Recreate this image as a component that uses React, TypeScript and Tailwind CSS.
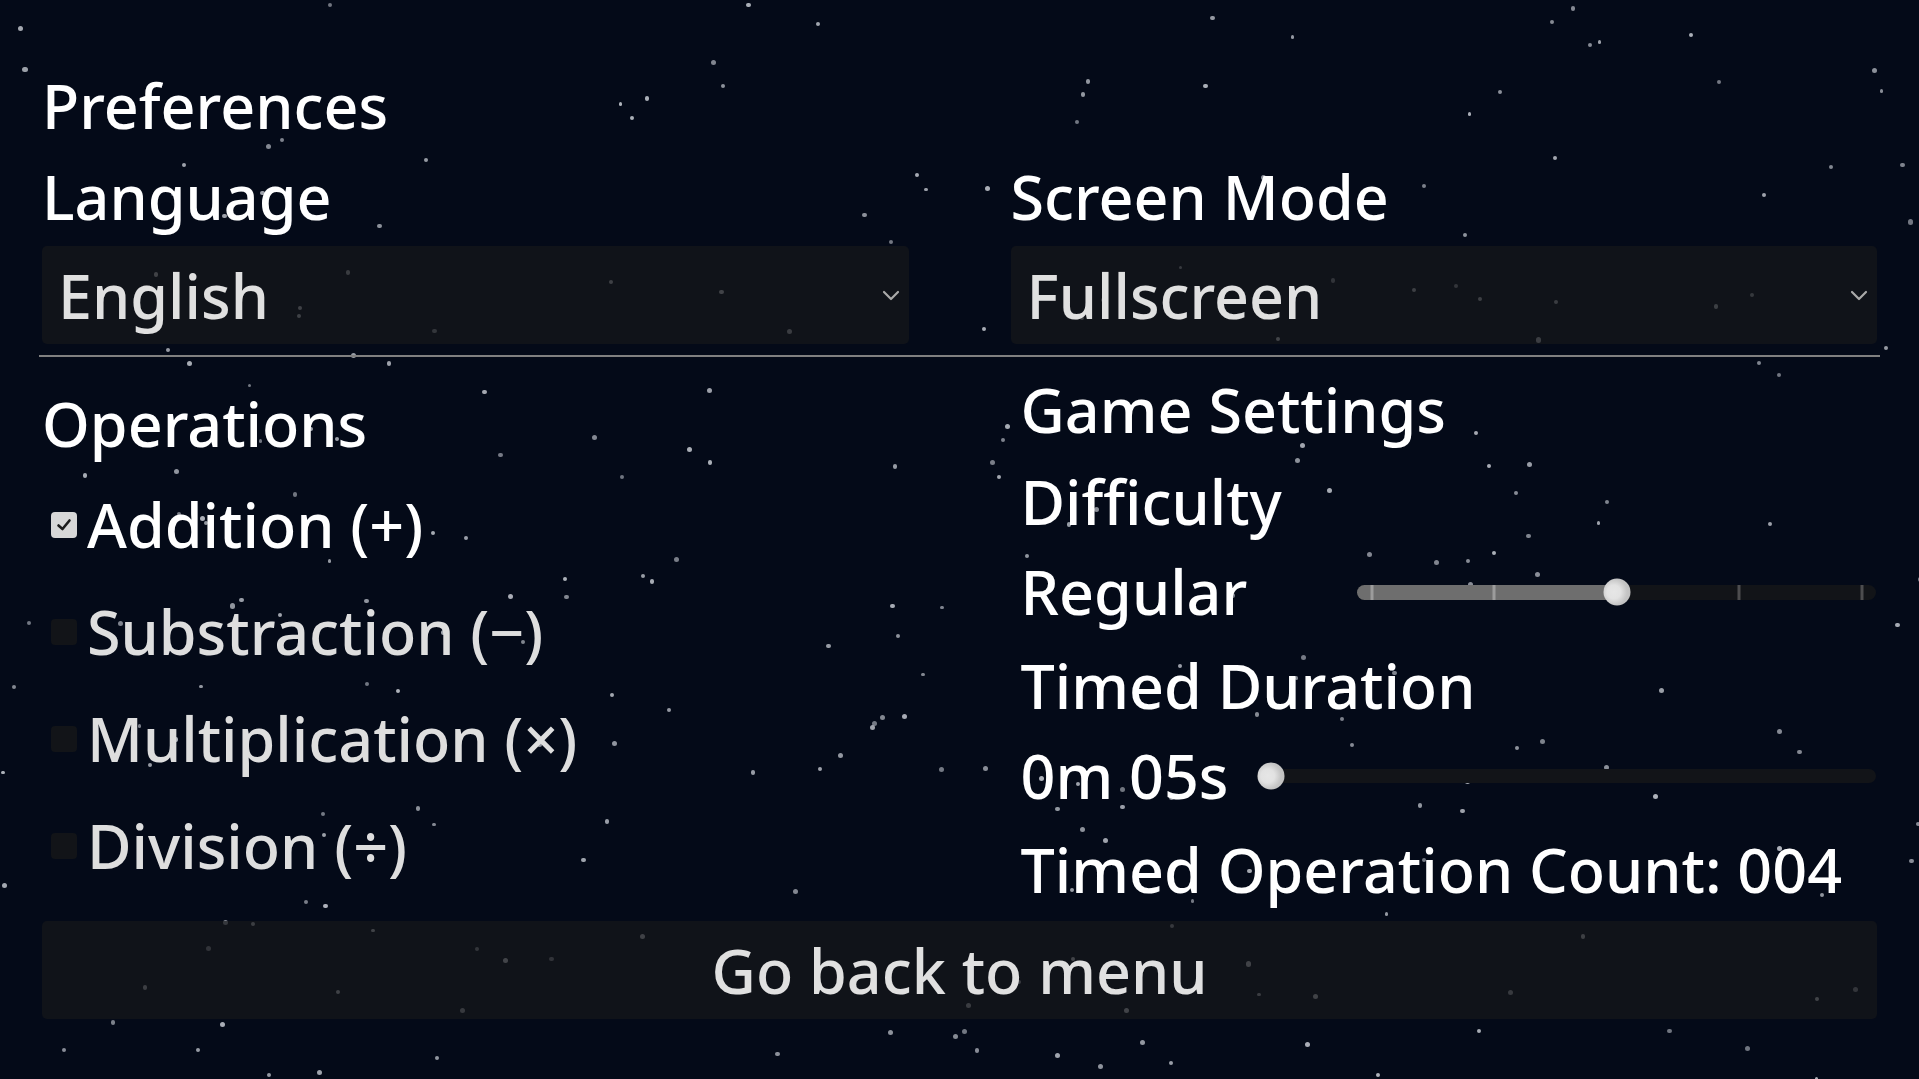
import { useMemo } from 'react';

const OPERATIONS = [
  { label: 'Addition (+)', checked: true },
  { label: 'Substraction (−)', checked: false },
  { label: 'Multiplication (×)', checked: false },
  { label: 'Division (÷)', checked: false },
];

// deterministic star field so every render looks the same
function makeStars(count: number, seed: number) {
  let s = seed;
  const rand = () => {
    s |= 0;
    s = (s + 0x6d2b79f5) | 0;
    let t = Math.imul(s ^ (s >>> 15), 1 | s);
    t = (t + Math.imul(t ^ (t >>> 7), 61 | t)) ^ t;
    return ((t ^ (t >>> 14)) >>> 0) / 4294967296;
  };
  return Array.from({ length: count }, () => ({
    x: rand() * 1919,
    y: rand() * 1079,
    size: 3.6 + rand() * 1.6,
    alpha: 0.6 + rand() * 0.35,
  }));
}

function Stars() {
  const stars = useMemo(() => makeStars(260, 7), []);
  return (
    <div className="pointer-events-none absolute inset-0">
      {stars.map((st, i) => (
        <span
          key={i}
          className="absolute rounded-full bg-[#b8bcc4]"
          style={{ left: st.x, top: st.y, width: st.size, height: st.size, opacity: st.alpha }}
        />
      ))}
    </div>
  );
}

function Chevron() {
  return (
    <svg width="18" height="11" viewBox="0 0 18 11" fill="none">
      <polyline points="2,2 9,9 16,2" stroke="#a9a9a9" strokeWidth="2.2" strokeLinecap="round" strokeLinejoin="round" />
    </svg>
  );
}

function Select({ value }: { value: string }) {
  return (
    <div className="mt-[4px] flex h-[98px] items-center justify-between rounded-[5px] bg-[rgba(22,23,26,0.7)] pl-[16px] pr-[9px] text-[#e0e0e0]">
      <span>{value}</span>
      <Chevron />
    </div>
  );
}

function Checkbox({ checked }: { checked: boolean }) {
  return (
    <span
      className={`flex h-[26px] w-[26px] shrink-0 items-center justify-center rounded-[4px] ${
        checked ? 'bg-[#d7d7d7]' : 'bg-[#121418]'
      }`}
    >
      {checked && (
        <svg width="18" height="18" viewBox="0 0 18 18" fill="none">
          <polyline points="3.5,9.5 7.5,13 14.5,4.5" stroke="#1c1c1c" strokeWidth="2.6" strokeLinecap="round" strokeLinejoin="round" />
        </svg>
      )}
    </span>
  );
}

function Thumb() {
  return (
    <span className="absolute top-1/2 h-[27px] w-[27px] -translate-x-1/2 -translate-y-1/2 rounded-full bg-[radial-gradient(circle_at_38%_50%,#e6e6e6_0%,#e2e2e2_32%,#c4c4c4_62%,#bcbcbc_100%)]" />
  );
}

function DifficultySlider({ value, steps }: { value: number; steps: number }) {
  const ticks = Array.from({ length: steps + 1 }, (_, i) => i / steps);
  const pos = (p: number) => `calc(15px + (100% - 29px) * ${p})`;
  return (
    <div className="relative mr-[1px] h-[15px] flex-1 rounded-full bg-[#121418]">
      <div className="absolute inset-y-0 left-0 rounded-full bg-[#6e6e6e]" style={{ width: pos(value) }} />
      {ticks.map((t) => (
        <span
          key={t}
          className={`absolute inset-y-0 w-[3px] -translate-x-1/2 ${t <= value ? 'bg-[#9c9c9c]' : 'bg-[#4d4d4f]'}`}
          style={{ left: pos(t) }}
        />
      ))}
      <span className="absolute inset-y-0" style={{ left: pos(value) }}>
        <Thumb />
      </span>
    </div>
  );
}

function DurationSlider() {
  return (
    <div className="relative ml-[29px] mr-[1px] h-[14px] flex-1 rounded-full bg-[#121418]">
      <span className="absolute inset-y-0 left-[14px]">
        <Thumb />
      </span>
    </div>
  );
}

export default function App() {
  return (
    <div className="relative h-screen w-full overflow-hidden bg-[#040a18] font-['Noto_Sans',sans-serif] text-[61px] font-medium leading-[91px] text-white">
      <Stars />

      <div className="relative z-10 flex flex-col px-[42px] pt-[60px]">
        <h1>Preferences</h1>

        <div className="grid grid-cols-2 gap-x-[102px]">
          <div>
            <h2>Language</h2>
            <Select value="English" />
          </div>
          <div>
            <h2>Screen Mode</h2>
            <Select value="Fullscreen" />
          </div>
        </div>

        <div className="-mx-[3px] mt-[11px] h-[2px] bg-[#808080]" />

        <div className="grid grid-cols-2 gap-x-[102px]">
          <div className="pt-[21px]">
            <h2>Operations</h2>
            <div className="mt-[10px] flex flex-col gap-[16px]">
              {OPERATIONS.map((op) => (
                <label key={op.label} className="flex items-center gap-[10px] pl-[9px]">
                  <Checkbox checked={op.checked} />
                  <span className={op.checked ? 'text-white' : 'text-[#dedede]'}>{op.label}</span>
                </label>
              ))}
            </div>
          </div>

          <div className="pl-[10px] pt-[7px] leading-[92px]">
            <h2>Game Settings</h2>
            <h3>Difficulty</h3>
            <div className="flex h-[92px] items-center pb-[4px]">
              <span className="w-[336px] shrink-0">Regular</span>
              <DifficultySlider value={0.5} steps={4} />
            </div>
            <h3>Timed Duration</h3>
            <div className="flex h-[92px] items-center pb-[4px]">
              <span className="shrink-0">0m 05s</span>
              <DurationSlider />
            </div>
            <p>Timed Operation Count: 004</p>
          </div>
        </div>

        <button className="mt-[5px] h-[98px] w-full rounded-[5px] bg-[rgba(22,23,26,0.7)] text-[#e0e0e0]">
          Go back to menu
        </button>
      </div>
    </div>
  );
}
